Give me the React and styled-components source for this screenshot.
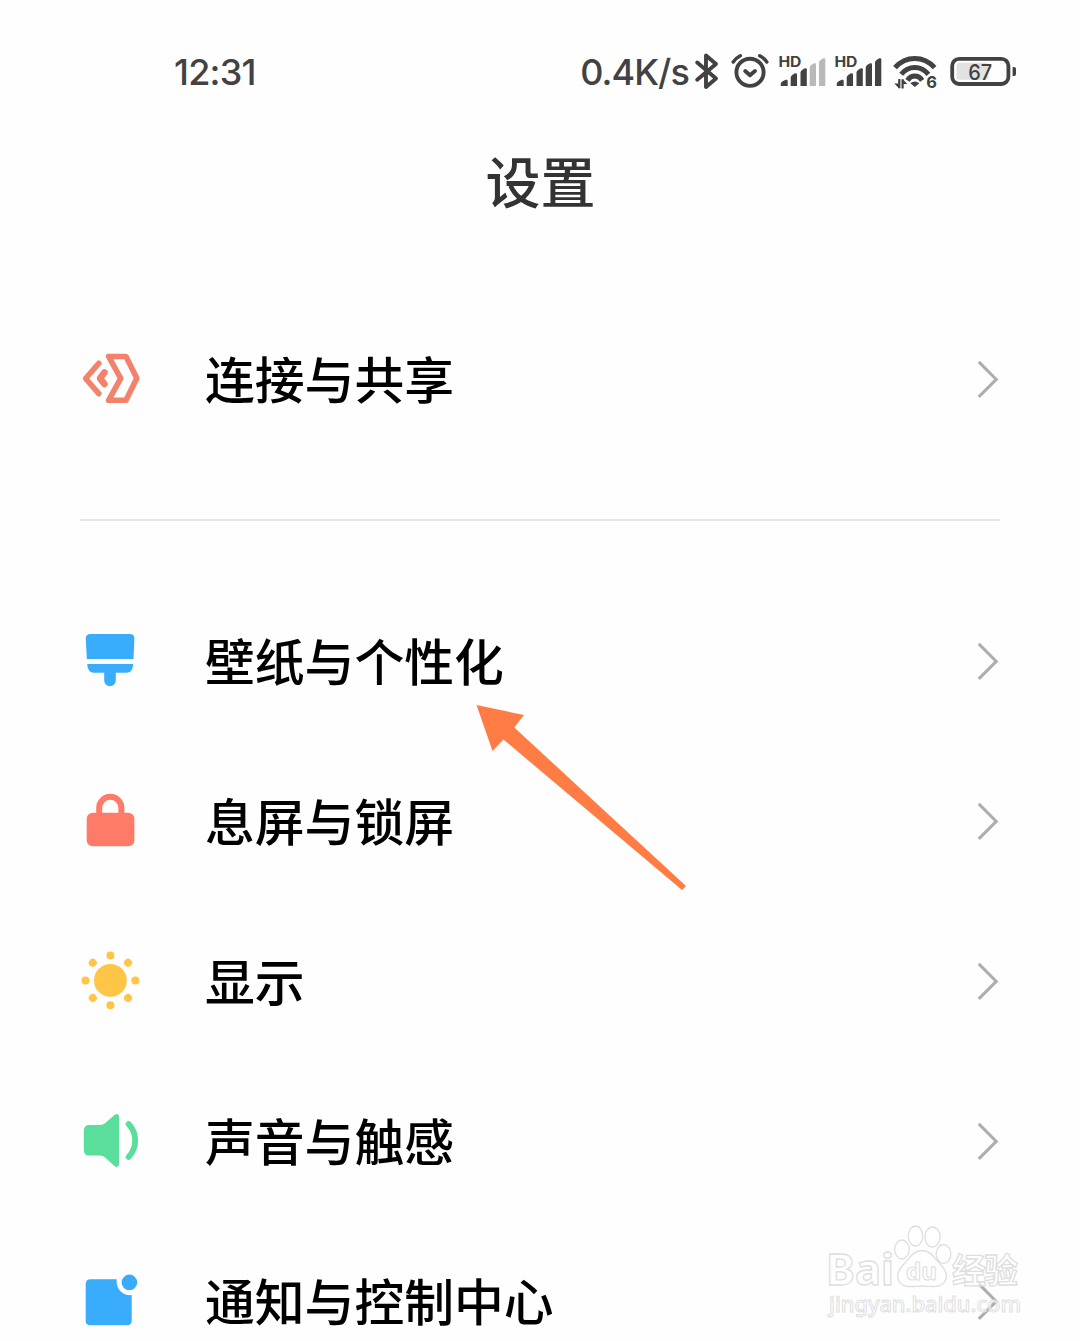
import React from 'react';
import styled, { createGlobalStyle } from 'styled-components';

const Global = createGlobalStyle`
  *, *::before, *::after { box-sizing: border-box; }
  body { margin: 0; background: #fefefe; }
`;

const latin = `Inter, "Open Sans", sans-serif`;
const humanist = `"Noto Sans", "Open Sans", sans-serif`;
const cjk = `"Noto Sans CJK SC", sans-serif`;

const Page = styled.main`
  position: relative;
  width: 1080px;
  height: 1341px;
  overflow: hidden;
  background: #fefefe;
  font-family: ${cjk};
`;

const StatusBar = styled.header`
  display: flex;
  align-items: center;
  justify-content: space-between;
  height: 144px;
  padding: 0 64px 0 174px;
  color: #424242;
  font-family: ${latin};
`;

const StatusText = styled.span`
  font-size: 36px;
  font-weight: 500;
  line-height: 40px;
  letter-spacing: ${(p) => p.$spacing};
  white-space: nowrap;
`;

const StatusIcons = styled.div`
  display: flex;
  align-items: center;
`;

const StatusIcon = styled.svg`
  display: block;
  flex: none;
  width: ${(p) => p.$width}px;
  height: 40px;
  margin-left: ${(p) => p.$gap}px;
  overflow: visible;
  color: #424242;
`;

const Title = styled.h1`
  display: flex;
  align-items: center;
  justify-content: center;
  height: 70px;
  margin: 0;
  padding-left: 1px;
  color: #333;
  font-size: 55px;
  font-weight: 500;
  line-height: 70px;
`;

const Section = styled.section`
  display: flex;
  flex-direction: column;
  padding: ${(p) => p.$top}px 80px ${(p) => p.$bottom}px;
`;

const Row = styled.div`
  display: flex;
  align-items: center;
  flex: none;
  height: 160px;
`;

const RowIcon = styled.svg`
  display: block;
  flex: none;
  width: 60px;
  height: 60px;
  margin-right: 65px;
  overflow: visible;
`;

const RowLabel = styled.span`
  flex: 1;
  padding-bottom: 5px;
  color: #000;
  font-size: 49.8px;
  font-weight: 500;
  line-height: 72px;
`;

const ChevronSvg = styled.svg`
  display: block;
  flex: none;
  width: 24px;
  height: 40px;
`;

const Divider = styled.hr`
  width: 920px;
  height: 2px;
  margin: 0 auto;
  border: 0;
  background: #e4e4e4;
`;

const Pointer = styled.svg`
  position: absolute;
  left: 470px;
  top: 700px;
  width: 220px;
  height: 195px;
`;

const Watermark = styled.svg`
  position: absolute;
  left: 810px;
  top: 1211px;
  width: 230px;
  height: 130px;
`;

const SvgText = styled.text`
  font-family: ${(p) => p.$family || latin};
  font-size: ${(p) => p.$size}px;
  font-weight: ${(p) => p.$weight || 700};
`;

const Chevron = () => (
  <ChevronSvg viewBox="0 0 24 40">
    <path d="M2.8 2.9 L20.3 20.4 L2.8 37.9" fill="none" stroke="#adadad" strokeWidth="3" />
  </ChevronSvg>
);

const Signal = ({ gap, active }) => {
  const bars = [
    [1.7, 8.7, 27.5],
    [11.7, 18, 21],
    [21.5, 27.8, 16],
    [30.7, 37, 11],
    [40, 46.3, 6],
  ];
  return (
    <StatusIcon $width={47} $gap={gap} viewBox="0 0 47 40">
      <SvgText $size={14} x="-0.6" y="15.4" textLength="23" lengthAdjust="spacingAndGlyphs" fill="currentColor">HD</SvgText>
      {bars.map(([l, r, t], i) => (
        <path
          key={l}
          d={`M${l} 34 V${t + 4.5} Q${l} ${t + 3} ${l + 1.5} ${t + 2} L${r - 2} ${t + 0.3} Q${r} ${t - 0.3} ${r} ${t + 1.5} V34 Z`}
          fill={i < active ? '#424242' : '#b9b9b9'}
        />
      ))}
    </StatusIcon>
  );
};

const ConnectIcon = () => (
  <RowIcon viewBox="0 0 60 60" fill="none" stroke="#f3816c" strokeWidth="5.6" strokeLinecap="round" strokeLinejoin="round">
    <path d="M18.8 14.3 L5.6 29.5 L18.8 44.7" />
    <path d="M24.4 23.5 L20 29.3 L24.4 35.1" strokeWidth="6.6" />
    <path d="M28.6 7.5 H46 L56.8 29.3 L46 51.3 H28.6 L40.7 29.3 Z" />
  </RowIcon>
);

const WallpaperIcon = () => (
  <RowIcon viewBox="0 0 60 60" fill="#39acfc">
    <path d="M10.5 3 H49.8 Q54.6 3 54.4 7.8 L53.5 28 H6.8 L5.8 7.8 Q5.7 3 10.5 3 Z" />
    <path d="M7.2 33 H53.2 Q52.8 41.7 46.5 41.7 H35.8 V49.5 A5.8 5.8 0 0 1 24.2 49.5 V41.7 H13.8 Q7.8 41.7 7.2 33 Z" />
  </RowIcon>
);

const LockIcon = () => (
  <RowIcon viewBox="0 0 60 60">
    <rect x="6.7" y="21.8" width="47.7" height="33.4" rx="6" fill="#fd7b68" />
    <path d="M19.2 24 V16.9 A11.1 11.1 0 0 1 41.4 16.9 V24" fill="none" stroke="#fd7b68" strokeWidth="6" />
  </RowIcon>
);

const SunIcon = () => (
  <RowIcon viewBox="0 0 60 60" fill="#fec546">
    <circle cx="30.4" cy="29.4" r="16.4" />
    {[0, 45, 90, 135, 180, 225, 270, 315].map((a) => (
      <circle key={a} cx="55.3" cy="29.4" r="4" transform={`rotate(${a} 30.4 29.4)`} />
    ))}
  </RowIcon>
);

const SoundIcon = () => (
  <RowIcon viewBox="0 0 60 60">
    <path d="M9.5 14 H20 Q23 14 25 12.2 L34.2 4.2 Q35.5 3 37 3 Q39 3 39 5.5 V53.3 Q39 56 37 56 Q35.5 56 34.2 54.8 L25 46.4 Q23 44.6 20 44.6 H9.5 Q3.8 44.6 3.8 39 V19.7 Q3.8 14 9.5 14 Z" fill="#59df9b" />
    <path d="M48.6 13 Q55.2 20 55.2 29.5 T48.6 46" fill="none" stroke="#59df9b" strokeWidth="5.8" strokeLinecap="round" />
  </RowIcon>
);

const NoticeIcon = () => (
  <RowIcon viewBox="0 0 60 60" fill="#39acfc">
    <path d="M10.4 8.3 H36.8 A13.3 13.3 0 0 0 51.7 24 V49.5 Q51.7 54.3 47 54.3 H10.4 Q5.7 54.3 5.7 49.5 V13 Q5.7 8.3 10.4 8.3 Z" />
    <circle cx="49.4" cy="11.4" r="7.8" />
  </RowIcon>
);

const SettingRow = ({ icon: Icon, label }) => (
  <Row>
    <Icon />
    <RowLabel>{label}</RowLabel>
    <Chevron />
  </Row>
);

const items = [
  { icon: WallpaperIcon, label: '壁纸与个性化' },
  { icon: LockIcon, label: '息屏与锁屏' },
  { icon: SunIcon, label: '显示' },
  { icon: SoundIcon, label: '声音与触感' },
  { icon: NoticeIcon, label: '通知与控制中心' },
];

export default function App() {
  return (
    <>
      <Global />
      <Page>
        <StatusBar>
          <StatusText $spacing="-0.8px">12:31</StatusText>
          <StatusIcons>
            <StatusText $spacing="-0.9px">0.4K/s</StatusText>
            <StatusIcon $width={24} $gap={6} viewBox="0 0 24 40">
              <path d="M2.2 10.5 L21 26.6 L11 35 V3.5 L21 12 L2.2 27.8" fill="none" stroke="currentColor" strokeWidth="3.9" strokeLinejoin="round" strokeLinecap="round" />
            </StatusIcon>
            <StatusIcon $width={38} $gap={12} viewBox="0 0 38 40" fill="none" stroke="currentColor" strokeWidth="3.9" strokeLinecap="round">
              <circle cx="19" cy="20.3" r="13.6" />
              <path d="M14.2 19 L19 23.3 L24 19" strokeLinejoin="round" />
              <path d="M2.2 10 Q5 6 9.3 3.8 M28.7 3.8 Q33 6 35.8 10" strokeWidth="3.5" />
            </StatusIcon>
            <Signal gap={10} active={3} />
            <Signal gap={9} active={5} />
            <StatusIcon $width={45} $gap={11} viewBox="0 0 45 40">
              <g fill="none" stroke="currentColor" strokeWidth="5">
                <path d="M2 15.6 C13 3.4 30.5 3.4 41.6 15.6" />
                <path d="M8.2 22.3 C15.5 13.2 28 13.2 35.4 22.3" />
                <path d="M14.4 28.4 C18.3 22.6 25.3 22.6 29.2 28.4" />
              </g>
              <path d="M17.3 31.3 Q21.8 27.6 26.3 31.3 L21.8 35 Z" fill="currentColor" />
              <path d="M6.3 27 V36.3 M9.6 36.5 V27.2" fill="none" stroke="currentColor" strokeWidth="2.2" />
              <path d="M1.2 31.5 H6 V36.3 Z M9.8 27.2 L14.4 32 H9.8 Z" fill="currentColor" />
              <SvgText $size={16.5} x="33.3" y="36.2" fill="currentColor">6</SvgText>
            </StatusIcon>
            <StatusIcon $width={66} $gap={12} viewBox="0 0 66 40">
              <rect x="6.5" y="10.8" width="32" height="17" rx="3" fill="#e2e2e2" />
              <rect x="2.2" y="6.8" width="56.2" height="25.2" rx="7" fill="none" stroke="currentColor" strokeWidth="3.8" />
              <path d="M62.6 15 H64 Q66 15 66 17 V22 Q66 24 64 24 H62.6 Z" fill="currentColor" />
              <SvgText $size={22} $weight={500} x="18.2" y="27.8" textLength="24" lengthAdjust="spacingAndGlyphs" fill="currentColor">67</SvgText>
            </StatusIcon>
          </StatusIcons>
        </StatusBar>
        <Title>设置</Title>
        <Section $top={85} $bottom={60}>
          <SettingRow icon={ConnectIcon} label="连接与共享" />
        </Section>
        <Divider />
        <Section $top={60} $bottom={0}>
          {items.map((item) => (
            <SettingRow key={item.label} {...item} />
          ))}
        </Section>
        <Pointer viewBox="470 700 220 195">
          <path d="M476.5 705 L524 715 L514.3 727.5 L686 886 L682 890 L503.5 739.5 L492.5 751 Z" fill="#ff7d45" />
        </Pointer>
        <Watermark viewBox="0 0 230 130" fill="#fff" fillOpacity="0.6" stroke="#dedede" strokeWidth="1.3">
          <SvgText $family={humanist} $size={43} x="16" y="73.5" textLength="68" lengthAdjust="spacingAndGlyphs">Bai</SvgText>
          <ellipse cx="92" cy="38.5" rx="7.3" ry="9.5" />
          <ellipse cx="105.5" cy="25" rx="7.2" ry="10" />
          <ellipse cx="122.5" cy="26" rx="7.6" ry="10" />
          <ellipse cx="133.5" cy="43" rx="7.3" ry="9.5" />
          <path d="M112 39.5 C121 39.5 124 47 130 53 C136 59 138 65 135 70 C131 78 121 75 112 75 C103 75 93 78 89 70 C86 64 88 59 94 53 C100 47 103 39.5 112 39.5 Z" />
          <SvgText $family={humanist} $size={23} x="96" y="69" textLength="31" lengthAdjust="spacingAndGlyphs" strokeWidth="1">du</SvgText>
          <SvgText $family={cjk} $size={34} x="142" y="72" textLength="66">经验</SvgText>
          <SvgText $family={humanist} $size={22} $weight={500} x="19" y="101" textLength="192" lengthAdjust="spacingAndGlyphs" strokeWidth="1">jingyan.baidu.com</SvgText>
        </Watermark>
      </Page>
    </>
  );
}
